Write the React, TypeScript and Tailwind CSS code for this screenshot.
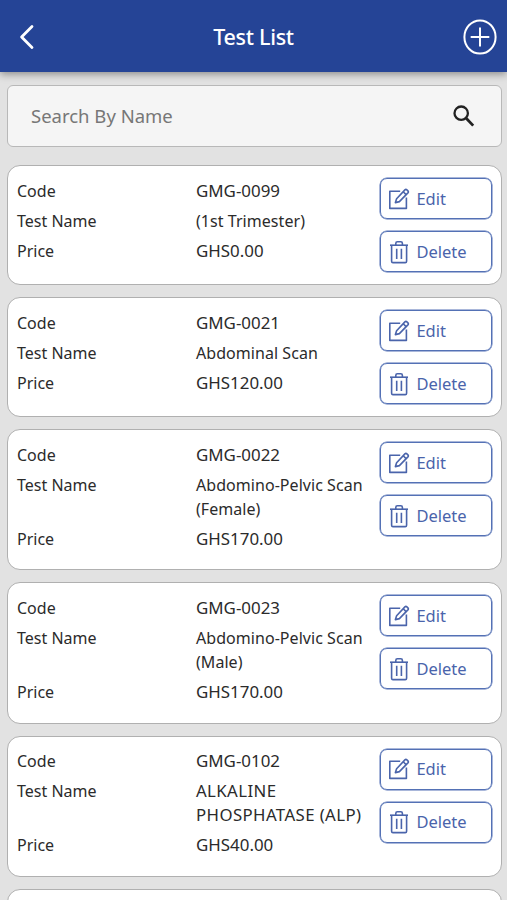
import React, { useState } from "react";

interface LabTest {
  code: string;
  name: string;
  price: string;
}

const TESTS: LabTest[] = [
  { code: "GMG-0099", name: "(1st Trimester)", price: "GHS0.00" },
  { code: "GMG-0021", name: "Abdominal Scan", price: "GHS120.00" },
  { code: "GMG-0022", name: "Abdomino-Pelvic Scan (Female)", price: "GHS170.00" },
  { code: "GMG-0023", name: "Abdomino-Pelvic Scan (Male)", price: "GHS170.00" },
  { code: "GMG-0102", name: "ALKALINE PHOSPHATASE (ALP)", price: "GHS40.00" },
];

const BackIcon = () => (
  <svg width="16" height="26" viewBox="0 0 16 26" fill="none" stroke="currentColor" strokeWidth="2.8" strokeLinecap="round" strokeLinejoin="round">
    <path d="M13 2.5L2.6 13L13 23.5" />
  </svg>
);

const AddIcon = () => (
  <svg width="34" height="36" viewBox="0 0 34 36" fill="none" stroke="currentColor" strokeWidth="2">
    <ellipse cx="17" cy="18" rx="15.6" ry="16.6" />
    <path d="M17 8.5v19M7.7 18h18.6" />
  </svg>
);

const SearchIcon = () => (
  <svg width="22" height="22" viewBox="0 0 22 22" fill="none" stroke="currentColor">
    <circle cx="8.2" cy="8.2" r="6.7" strokeWidth="2.3" />
    <path d="M13.2 13.2L20.2 20.6" strokeWidth="2.8" />
  </svg>
);

const EditIcon = () => (
  <svg width="22" height="22" viewBox="0 0 22 22" fill="none" stroke="currentColor" strokeWidth="1.6" strokeLinejoin="round">
    <path d="M12.2 3.2H1.8V20.4H18.4V9.4" />
    <path d="M7.4 14.6L8.6 10.7L16.9 1.9Q17.9 1 18.9 1.9L19.9 2.9Q20.8 3.9 19.9 4.9L11.4 13.6Z" />
    <path d="M15.2 3.7L18.1 6.6" />
  </svg>
);

const TrashIcon = () => (
  <svg width="20" height="24" viewBox="0 0 20 24" fill="none" stroke="currentColor" strokeWidth="1.6" strokeLinejoin="round">
    <path d="M1 5.2H19" />
    <path d="M6.8 5V3.4Q6.8 1.8 8.4 1.8H11.8Q13.4 1.8 13.4 3.4V5" />
    <path d="M2.6 5V21.2Q2.6 22.6 4 22.6H16.2Q17.6 22.6 17.6 21.2V5" />
    <path d="M7.7 8.8V19M12.4 8.8V19" />
  </svg>
);

const ActionButton = ({ icon, label }: { icon: React.ReactNode; label: string }) => (
  <button className="flex h-[41px] w-[112px] items-center rounded-[7px] border border-[#5471b5] pl-[7.4px] text-[#4a64ab] shadow-[0_0_0_0.5px_#5471b5]">
    <span className="flex w-[22px] justify-center">{icon}</span>
    <span className="ml-[6px] text-[16.5px] leading-6">{label}</span>
  </button>
);

const Row = ({ label, value, valueClass }: { label: string; value: string; valueClass?: string }) => (
  <div className="flex text-[16px] leading-6">
    <div className="w-[179px] shrink-0">{label}</div>
    <div className={`w-[176px] ${valueClass ?? ""}`}>{value}</div>
  </div>
);

const TestCard = ({ test }: { test: LabTest }) => {
  const isUpper = test.name === test.name.toUpperCase();

  return (
    <div className="flex justify-between rounded-[13px] border border-[#b0b0b0] bg-white pr-[9px] pl-[9px] pt-3">
      <div className="flex flex-col gap-[6px] pt-[0.7px] pb-[18.7px] text-[#2b2b2b]">
        <Row label="Code" value={test.code} valueClass="text-[16.9px]" />
        <Row
          label="Test Name"
          value={test.name}
          valueClass={isUpper ? "text-[16.8px] tracking-[0.4px]" : "tracking-[0.05px]"}
        />
        <Row label="Price" value={test.price} valueClass="text-[16.9px]" />
      </div>
      <div className="-ml-5 flex shrink-0 flex-col gap-3 pb-3">
        <ActionButton icon={<EditIcon />} label="Edit" />
        <ActionButton icon={<TrashIcon />} label="Delete" />
      </div>
    </div>
  );
};

const App: React.FC = () => {
  const [query, setQuery] = useState("");

  const tests = TESTS.filter((t) => t.name.toLowerCase().includes(query.toLowerCase()));

  return (
    <div className="h-[900px] w-[507px] overflow-hidden bg-[#e2e2e2] font-['Noto_Sans',sans-serif]">
      <header className="grid h-[72px] grid-cols-[1fr_auto_1fr] items-center bg-[#254496] px-[10px] text-white shadow-[0_2px_8px_rgba(0,0,0,0.4)]">
        <button className="mt-[2px] ml-[9px] justify-self-start">
          <BackIcon />
        </button>
        <h1 className="mt-px text-[21.5px] leading-7 font-medium tracking-[-0.3px]">Test List</h1>
        <button className="mt-[2px] justify-self-end">
          <AddIcon />
        </button>
      </header>

      <main className="pt-[13px] pr-[5px] pl-[7px]">
        <div className="flex h-[62px] items-center justify-between rounded-[6px] border border-[#b8b8b8] bg-[#f5f5f5] pr-[26px] pl-[23px] text-[#222]">
          <input
            className="w-[300px] bg-transparent text-[18.5px] outline-none placeholder:text-[#777]"
            placeholder="Search By Name"
            value={query}
            onChange={(e) => setQuery(e.target.value)}
          />
          <SearchIcon />
        </div>

        <div className="mt-[18px] flex flex-col gap-3">
          {tests.map((test) => (
            <TestCard key={test.code} test={test} />
          ))}
          <div className="h-[120px] rounded-[13px] border border-[#b0b0b0] bg-white" />
        </div>
      </main>
    </div>
  );
};

export default App;
